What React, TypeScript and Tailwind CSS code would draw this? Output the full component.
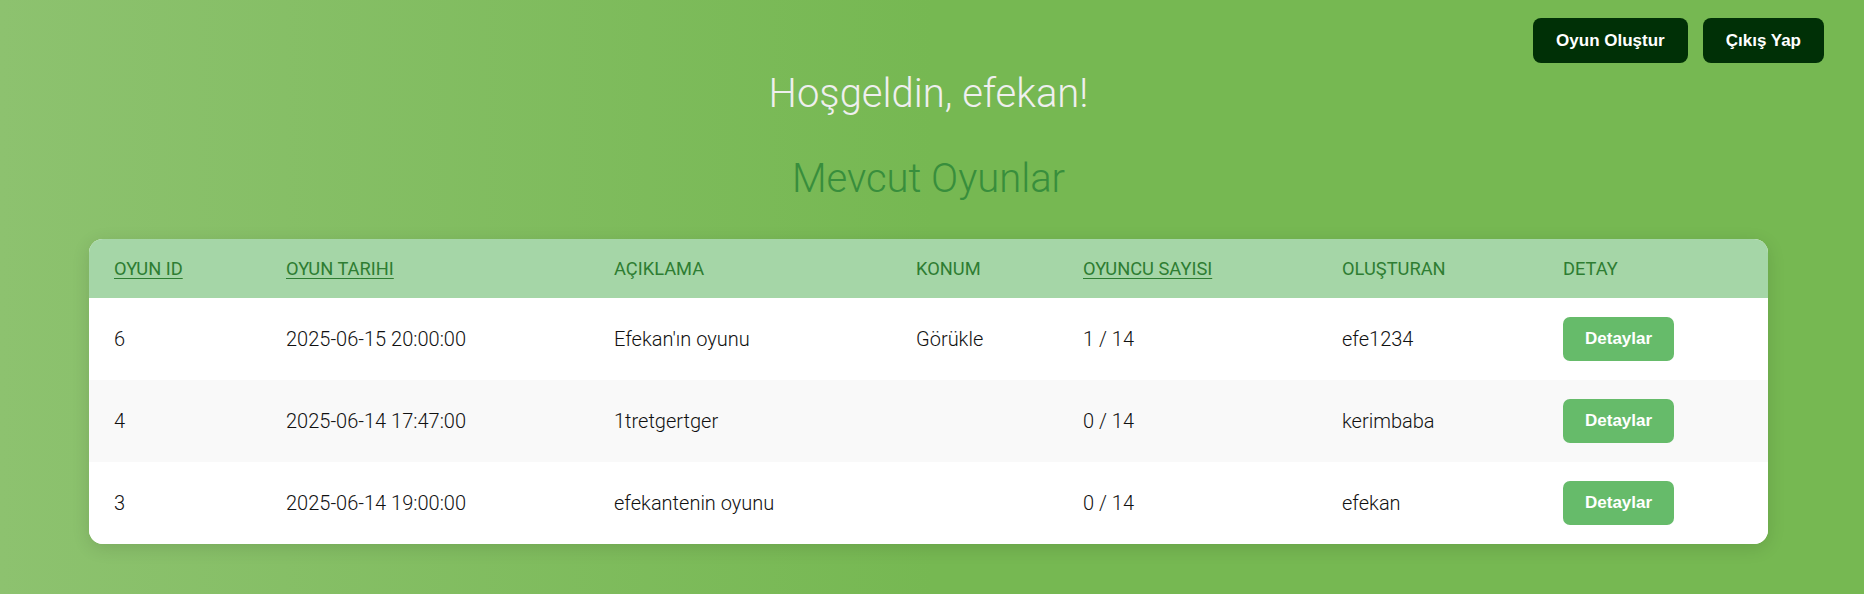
import React from "react";

type Game = {
  id: number;
  date: string;
  description: string;
  location: string;
  players: string;
  creator: string;
};

const games: Game[] = [
  {
    id: 6,
    date: "2025-06-15 20:00:00",
    description: "Efekan'ın oyunu",
    location: "Görükle",
    players: "1 / 14",
    creator: "efe1234",
  },
  {
    id: 4,
    date: "2025-06-14 17:47:00",
    description: "1tretgertger",
    location: "",
    players: "0 / 14",
    creator: "kerimbaba",
  },
  {
    id: 3,
    date: "2025-06-14 19:00:00",
    description: "efekantenin oyunu",
    location: "",
    players: "0 / 14",
    creator: "efekan",
  },
];

const columns = [
  { label: "OYUN ID", sortable: true },
  { label: "OYUN TARIHI", sortable: true },
  { label: "AÇIKLAMA", sortable: false },
  { label: "KONUM", sortable: false },
  { label: "OYUNCU SAYISI", sortable: true },
  { label: "OLUŞTURAN", sortable: false },
  { label: "DETAY", sortable: false },
];

const gridCols =
  "grid grid-cols-[172px_328px_302px_167px_259px_221px_1fr] items-center";

export default function App() {
  return (
    <div className="min-h-[594px] w-full bg-[linear-gradient(90deg,#8dc26f_0%,#76b852_50%)] font-['Roboto',sans-serif]">
      <header className="flex justify-end gap-[15px] pt-[18px] pr-[40px]">
        <button className="h-[45px] px-[23px] rounded-[8px] bg-[#003006] text-white text-[17px] font-bold font-['Liberation_Sans',Arial,sans-serif]">
          Oyun Oluştur
        </button>
        <button className="h-[45px] px-[23px] rounded-[8px] bg-[#003006] text-white text-[17px] font-bold font-['Liberation_Sans',Arial,sans-serif]">
          Çıkış Yap
        </button>
      </header>

      <main className="pl-[89px] pr-[96px]">
        <h1 className="mt-[7px] text-center text-[40px] font-light leading-[47px] text-[#efefef]">
          Hoşgeldin, efekan!
        </h1>
        <h2 className="mt-[38px] text-center text-[40px] font-light leading-[47px] text-[#388e3c]">
          Mevcut Oyunlar
        </h2>

        <div className="mt-[37px] overflow-hidden rounded-[14px] bg-white shadow-[0_4px_18px_rgba(0,0,0,0.12)]">
          <div className={`${gridCols} h-[59px] bg-[#a5d6a7]`}>
            {columns.map((col) => (
              <div key={col.label} className="pl-[25px]">
                <span
                  className={`text-[18.3px] text-[#2e7d32] ${
                    col.sortable ? "underline underline-offset-[3px] cursor-pointer" : ""
                  }`}
                >
                  {col.label}
                </span>
              </div>
            ))}
          </div>

          {games.map((game, idx) => (
            <div
              key={game.id}
              className={`${gridCols} h-[82px] text-[20px] font-light text-[#111111] ${
                idx % 2 === 1 ? "bg-[#f9f9f9]" : "bg-white"
              }`}
            >
              <div className="pl-[25px]">{game.id}</div>
              <div className="pl-[25px]">{game.date}</div>
              <div className="pl-[25px]">{game.description}</div>
              <div className="pl-[25px]">{game.location}</div>
              <div className="pl-[25px]">{game.players}</div>
              <div className="pl-[25px]">{game.creator}</div>
              <div className="pl-[25px]">
                <button className="h-[44px] px-[22px] rounded-[7px] bg-[#66bb6a] text-white text-[17px] font-bold font-['Liberation_Sans',Arial,sans-serif]">
                  Detaylar
                </button>
              </div>
            </div>
          ))}
        </div>
      </main>
    </div>
  );
}
